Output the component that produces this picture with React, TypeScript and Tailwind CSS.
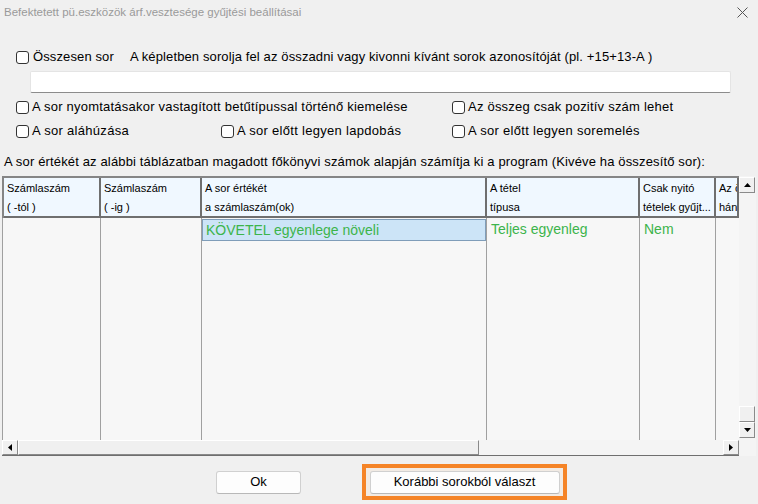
import React from "react";

const Cb = () => (
  <span className="inline-block w-[13px] h-[13px] rounded-[3px] border border-[#333] bg-white shrink-0" />
);

const Tri = ({ dir }: { dir: "up" | "down" | "left" | "right" }) => {
  const pts =
    dir === "up"
      ? "0,4 7,4 3.5,0"
      : dir === "down"
      ? "0,0 7,0 3.5,4"
      : dir === "left"
      ? "4,0 4,7 0,3.5"
      : "0,0 0,7 4,3.5";
  const w = dir === "up" || dir === "down" ? 7 : 4;
  const h = dir === "up" || dir === "down" ? 4 : 7;
  return (
    <svg width={w} height={h} viewBox={`0 0 ${w} ${h}`}>
      <polygon points={pts} fill="#000" />
    </svg>
  );
};

const Raised = ({ className, children }: { className: string; children?: React.ReactNode }) => (
  <div
    className={`flex items-center justify-center bg-[#f0f0f0] border border-t-white border-l-white border-r-[#8a8a8a] border-b-[#8a8a8a] ${className}`}
  >
    {children}
  </div>
);

export default function App() {
  const cols = [99, 101, 285, 153, 76, 23];
  const heads: [string, string][] = [
    ["Számlaszám", "( -tól )"],
    ["Számlaszám", "( -ig )"],
    ["A sor értékét", "a számlaszám(ok)"],
    ["A tétel", "típusa"],
    ["Csak nyitó", "tételek gyűjt..."],
    ["Az ö", "hán"],
  ];
  return (
    <div
      className="w-[758px] h-[504px] bg-[#f0f0f0] overflow-hidden text-black flex flex-col"
      style={{ fontFamily: '"Liberation Sans", Arial, sans-serif' }}
    >
      {/* title bar */}
      <div className="h-[25px] flex items-center justify-between pl-[4px] pr-[10px] shrink-0">
        <span className="text-[11.5px] text-[#9a9a9a]">
          Befektetett pü.eszközök árf.vesztesége gyűjtési beállításai
        </span>
        <svg width="11" height="11" viewBox="0 0 11 11">
          <path d="M0.5 0.5 L10.5 10.5 M10.5 0.5 L0.5 10.5" stroke="#555" strokeWidth="1" />
        </svg>
      </div>

      {/* row 1 */}
      <div className="mt-[22px] h-[20px] flex items-center pl-[16px] text-[13px] tracking-[0.12px] shrink-0">
        <Cb />
        <span className="ml-[4px]">Összesen sor</span>
        <span className="ml-[16px]">
          A képletben sorolja fel az összadni vagy kivonni kívánt sorok azonosítóját (pl. +15+13-A )
        </span>
      </div>

      {/* input */}
      <div className="mt-[4px] ml-[30px] w-[701px] h-[22px] bg-white border border-[#e4e4e4] border-b-[#8c8c8c] rounded-[2px] shrink-0" />

      {/* row 2 */}
      <div className="mt-[4px] h-[20px] flex items-center text-[13px] tracking-[0.22px] shrink-0">
        <div className="w-[452px] pl-[16px] flex items-center">
          <Cb />
          <span className="ml-[3px]">A sor nyomtatásakor vastagított betűtípussal történő kiemelése</span>
        </div>
        <div className="flex items-center">
          <Cb />
          <span className="ml-[3px]">Az összeg csak pozitív szám lehet</span>
        </div>
      </div>

      {/* row 3 */}
      <div className="mt-[4px] h-[20px] flex items-center text-[13px] tracking-[0.3px] shrink-0">
        <div className="w-[221px] pl-[16px] flex items-center">
          <Cb />
          <span className="ml-[3px]">A sor aláhúzása</span>
        </div>
        <div className="w-[231px] flex items-center">
          <Cb />
          <span className="ml-[3px]">A sor előtt legyen lapdobás</span>
        </div>
        <div className="flex items-center">
          <Cb />
          <span className="ml-[3px]">A sor előtt legyen soremelés</span>
        </div>
      </div>

      {/* description */}
      <div className="mt-[11px] h-[20px] flex items-center pl-[4px] text-[13px] tracking-[0.15px] whitespace-nowrap shrink-0">
        A sor értékét az alábbi táblázatban magadott főkönyvi számok alapján számítja ki a program (Kivéve ha összesítő sor):
      </div>

      {/* table */}
      <div className="mt-[4px] ml-[2px] w-[754px] h-[280px] flex flex-col shrink-0">
        <div className="h-[264px] flex">
          <div className="w-[737px] flex flex-col overflow-hidden">
            {/* header */}
            <div className="h-[42px] flex bg-[#f0f8ff] border-t-2 border-l-2 border-[#858585] shrink-0">
              {heads.map((h, i) => (
                <div
                  key={i}
                  className="h-full border-r-2 border-b-2 border-[#6f6f6f] pl-[3px] text-[11px] leading-[20px] overflow-hidden whitespace-nowrap shrink-0"
                  style={{ width: i === 0 ? cols[i] - 2 : cols[i] }}
                >
                  <div>{h[0]}</div>
                  <div className="-mt-[1px]">{h[1]}</div>
                </div>
              ))}
            </div>
            {/* body */}
            <div className="flex-1 flex bg-[#f7f7f7] border-l border-[#a0a0a0]">
              {cols.map((w, i) => (
                <div
                  key={i}
                  className={`h-full shrink-0 ${i < 5 ? "border-r border-[#a0a0a0]" : ""}`}
                  style={{ width: i === 0 ? w - 1 : w }}
                >
                  {i === 2 && (
                    <div className="mt-[1px] h-[22px] bg-[#cce4f7] border border-[#7f9db9] text-[14px] text-[#3cb44b] leading-[20px] pl-[3px]">
                      KÖVETEL egyenlege növeli
                    </div>
                  )}
                  {i === 3 && (
                    <div className="mt-[1px] h-[22px] text-[14px] text-[#3cb44b] leading-[20px] pl-[4px]">
                      Teljes egyenleg
                    </div>
                  )}
                  {i === 4 && (
                    <div className="mt-[1px] h-[22px] text-[14px] text-[#3cb44b] leading-[20px] pl-[4px]">
                      Nem
                    </div>
                  )}
                </div>
              ))}
            </div>
          </div>
          {/* vertical scrollbar */}
          <div className="w-[17px] flex flex-col bg-[#f4f4f4] pt-[1px] pb-[2px]">
            <Raised className="h-[16px] w-[16px]">
              <Tri dir="up" />
            </Raised>
            <div className="flex-1" />
            <Raised className="h-[16px] w-[16px]" />
            <Raised className="h-[16px] w-[16px]">
              <Tri dir="down" />
            </Raised>
          </div>
        </div>
        {/* horizontal scrollbar */}
        <div className="h-[16px] flex">
          <div className="w-[737px] flex bg-[#f4f4f4] border-b border-[#6f6f6f]">
            <Raised className="w-[16px] h-full">
              <Tri dir="left" />
            </Raised>
            <Raised className="w-[461px] h-full" />
            <div className="flex-1" />
            <Raised className="w-[16px] h-full">
              <Tri dir="right" />
            </Raised>
          </div>
          <div className="w-[17px] bg-[#f4f4f4]" />
        </div>
      </div>

      {/* buttons */}
      <div className="mt-[8px] h-[36px] flex items-center shrink-0">
        <button className="ml-[216px] w-[85px] h-[23px] bg-[#fdfdfd] border border-[#d0d0d0] border-b-[#b8b8b8] rounded-[3px] text-[13px]">
          Ok
        </button>
        <div className="ml-[61px] w-[205px] h-[36px] border-4 border-[#f58427] bg-[#f2ebe4] flex items-center justify-center">
          <button className="w-[190px] h-[23px] bg-[#fdfdfd] border border-[#d0d0d0] border-b-[#b8b8b8] rounded-[3px] text-[13px]">
            Korábbi sorokból választ
          </button>
        </div>
      </div>
    </div>
  );
}
